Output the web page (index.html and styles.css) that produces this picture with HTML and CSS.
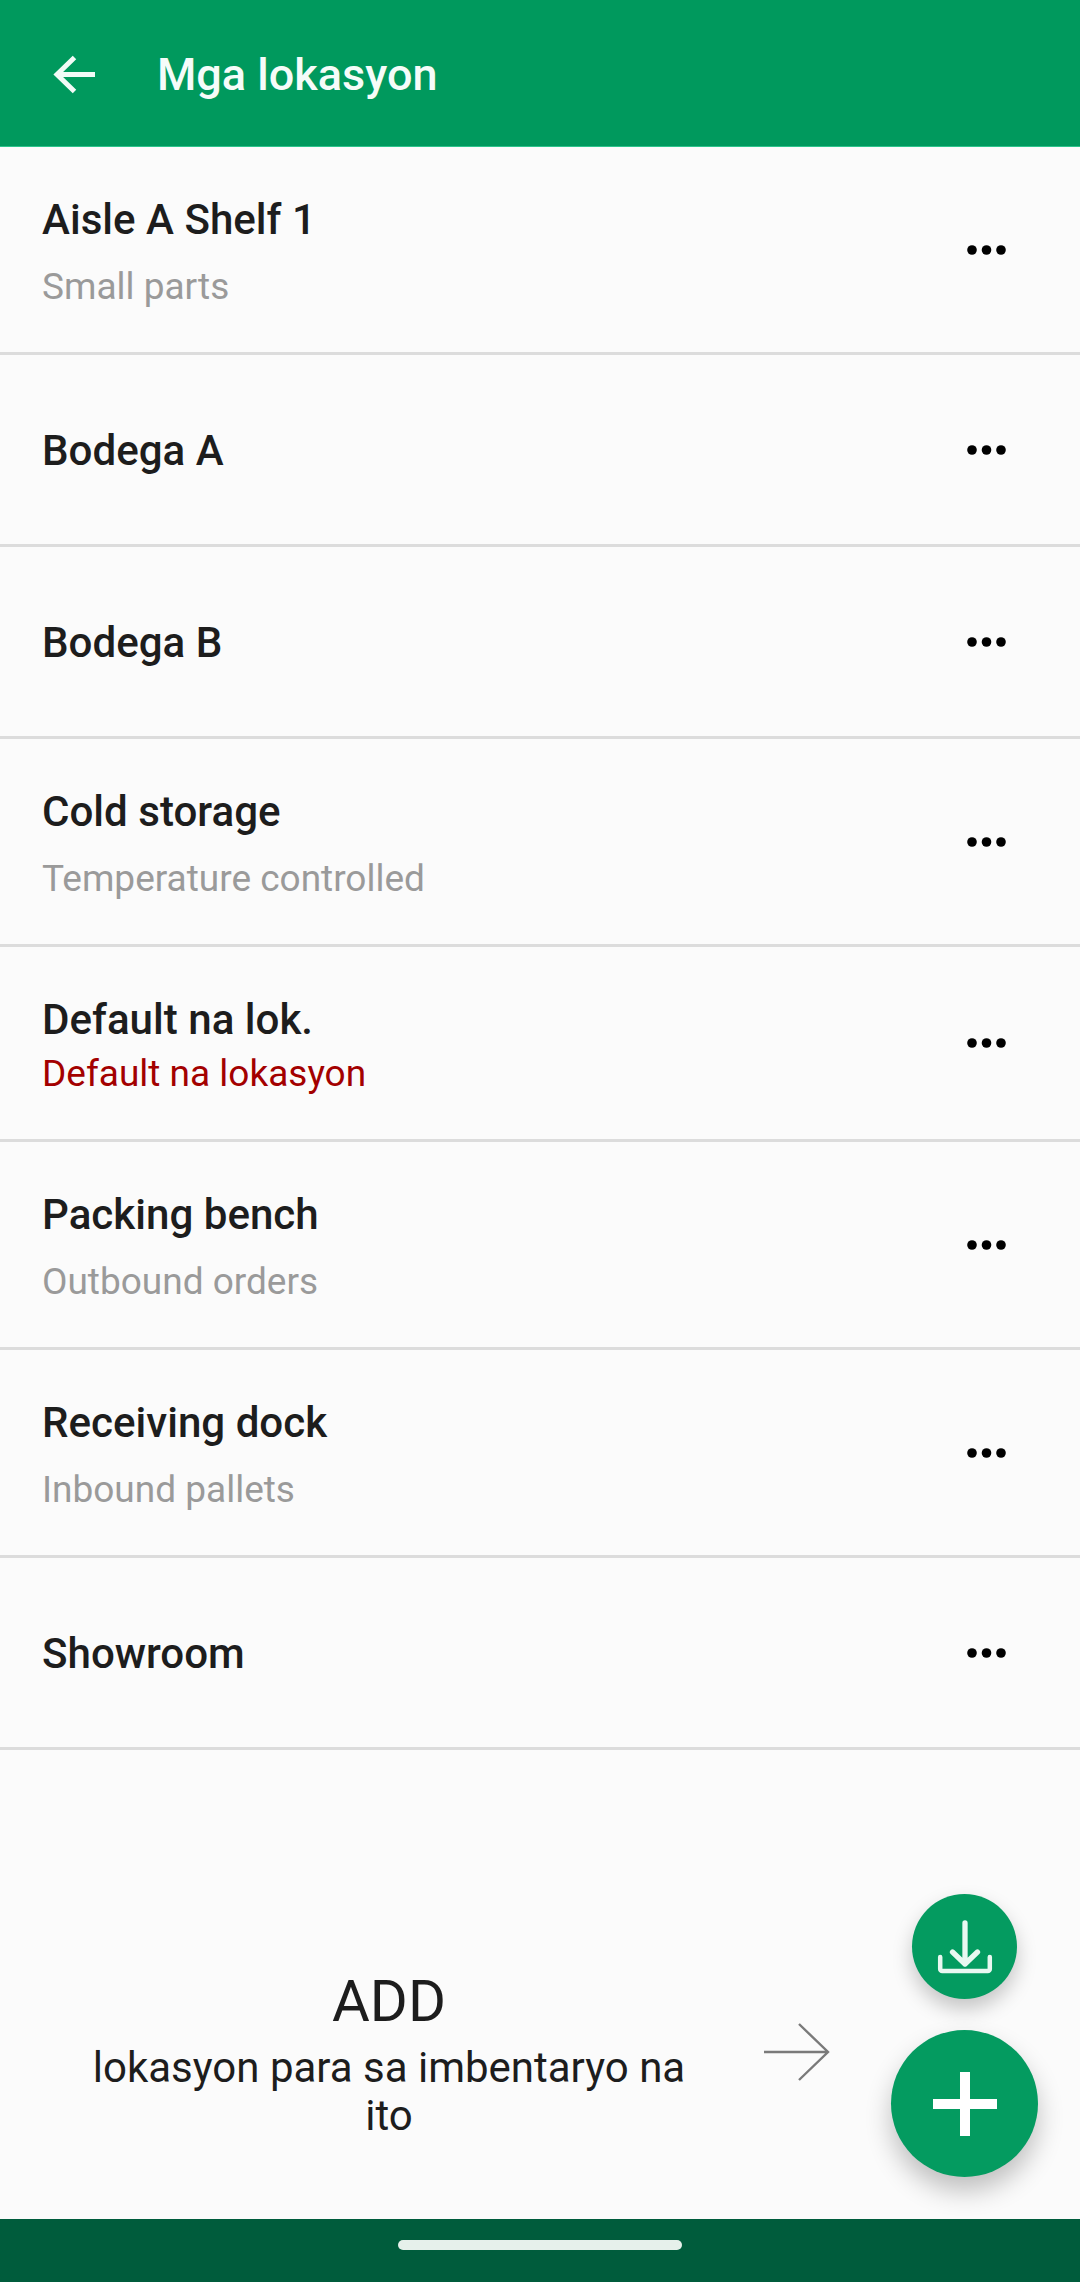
FILE: index.html
```html
<!DOCTYPE html>
<html lang="tl">
<head>
<meta charset="utf-8">
<title>Mga lokasyon</title>
<link rel="stylesheet" href="styles.css">
</head>
<body>
<div class="app">
  <header class="appbar">
    <svg class="back" viewBox="0 0 44 44" width="44" height="44"><path d="M43 21.500H4M22.500 4.500 5 21.500 22.500 38.500" fill="none" stroke="#f2fbf7" stroke-width="5"/></svg>
    <h1 class="appbar-title">Mga lokasyon</h1>
  </header>
  <ul class="list">
    <li class="row row-two"><div class="row-text"><div class="name">Aisle A Shelf 1</div><div class="sub">Small parts</div></div><svg class="more" viewBox="0 0 40 10" width="40" height="10"><circle cx="5" cy="5" r="4.800"/><circle cx="19.500" cy="5" r="4.800"/><circle cx="34" cy="5" r="4.800"/></svg></li>
    <li class="row row-one"><div class="row-text"><div class="name">Bodega A</div></div><svg class="more" viewBox="0 0 40 10" width="40" height="10"><circle cx="5" cy="5" r="4.800"/><circle cx="19.500" cy="5" r="4.800"/><circle cx="34" cy="5" r="4.800"/></svg></li>
    <li class="row row-one"><div class="row-text"><div class="name">Bodega B</div></div><svg class="more" viewBox="0 0 40 10" width="40" height="10"><circle cx="5" cy="5" r="4.800"/><circle cx="19.500" cy="5" r="4.800"/><circle cx="34" cy="5" r="4.800"/></svg></li>
    <li class="row row-two"><div class="row-text"><div class="name">Cold storage</div><div class="sub">Temperature controlled</div></div><svg class="more" viewBox="0 0 40 10" width="40" height="10"><circle cx="5" cy="5" r="4.800"/><circle cx="19.500" cy="5" r="4.800"/><circle cx="34" cy="5" r="4.800"/></svg></li>
    <li class="row row-default"><div class="row-text"><div class="name">Default na lok.</div><div class="sub sub-default">Default na lokasyon</div></div><svg class="more" viewBox="0 0 40 10" width="40" height="10"><circle cx="5" cy="5" r="4.800"/><circle cx="19.500" cy="5" r="4.800"/><circle cx="34" cy="5" r="4.800"/></svg></li>
    <li class="row row-two"><div class="row-text"><div class="name">Packing bench</div><div class="sub">Outbound orders</div></div><svg class="more" viewBox="0 0 40 10" width="40" height="10"><circle cx="5" cy="5" r="4.800"/><circle cx="19.500" cy="5" r="4.800"/><circle cx="34" cy="5" r="4.800"/></svg></li>
    <li class="row row-two"><div class="row-text"><div class="name">Receiving dock</div><div class="sub">Inbound pallets</div></div><svg class="more" viewBox="0 0 40 10" width="40" height="10"><circle cx="5" cy="5" r="4.800"/><circle cx="19.500" cy="5" r="4.800"/><circle cx="34" cy="5" r="4.800"/></svg></li>
    <li class="row row-one"><div class="row-text"><div class="name">Showroom</div></div><svg class="more" viewBox="0 0 40 10" width="40" height="10"><circle cx="5" cy="5" r="4.800"/><circle cx="19.500" cy="5" r="4.800"/><circle cx="34" cy="5" r="4.800"/></svg></li>
  </ul>
  <section class="hint">
    <div class="hint-text">
      <div class="hint-add">ADD</div>
      <div class="hint-desc">lokasyon para sa imbentaryo na ito</div>
    </div>
    <svg class="hint-arrow" viewBox="0 0 66 58" width="66" height="58"><path d="M0 29H64M35 1 64 29 35 57" fill="none" stroke="#7a7a7a" stroke-width="2.400"/></svg>
  </section>
  <button class="fab fab-small" aria-label="I-download">
    <svg viewBox="0 0 56 56" width="56" height="56"><path class="dl-arrow" d="M28 4V45M15.500 33 28 45 40.500 33"/><path class="dl-tray" d="M3.200 38V50a2 2 0 0 0 2 2H50.800a2 2 0 0 0 2-2V38"/></svg>
  </button>
  <button class="fab fab-large" aria-label="Add">
    <svg viewBox="0 0 64 64" width="64" height="64"><path d="M32 0V64M0 32H64" fill="none" stroke="#fff" stroke-width="10"/></svg>
  </button>
  <footer class="navbar"><span class="handle"></span></footer>
</div>
</body>
</html>
```
FILE: styles.css
```css
* { box-sizing: border-box; }
html, body { margin: 0; padding: 0; }
body { font-family: Roboto, "Noto Sans", sans-serif; background: #fbfbfb; }
.app { position: relative; width: 1080px; height: 2282px; display: flex; flex-direction: column; overflow: hidden; background: #fbfbfb; }
.appbar { height: 147px; flex: none; background: #00995d; display: flex; align-items: center; padding: 3px 0 0 52px; gap: 61px; border-bottom: 1px solid #2cc48c; }
.back { flex: none; }
.appbar-title { margin: 0; font-size: 45px; font-weight: 500; color: #f5fcf9; }
.list { list-style: none; margin: 0; padding: 0; flex: none; }
.row { display: flex; align-items: center; justify-content: space-between; padding: 0 73.500px 0 42px; border-bottom: 3px solid #dcdcdc; }
.row-two { height: 208px; }
.row-one { height: 192px; }
.row-default { height: 195px; }
.row-text { padding-top: 3px; }
.name { font-size: 42.100px; font-weight: 500; line-height: 50px; color: #1d1d1d; }
.sub { font-size: 37px; line-height: 42px; color: #9a9a9a; margin-top: 21px; }
.sub-default { color: #a30000; margin-top: 8px; }
.more { fill: #000; flex: none; }
.hint { flex: 1; display: flex; align-items: flex-start; padding: 219px 0 0 79px; }
.hint-text { width: 620px; text-align: center; color: #1d1d1d; }
.hint-add { font-size: 58px; line-height: 64px; }
.hint-desc { font-size: 42px; line-height: 48px; margin-top: 11px; }
.hint-arrow { flex: none; margin: 54px 0 0 65px; }
.fab { position: absolute; border: 0; padding: 0; border-radius: 50%; background: #049b60; display: flex; align-items: center; justify-content: center; }
.fab-small { left: 912px; top: 1894px; width: 105px; height: 105px; box-shadow: 0 10px 20px rgba(0,0,0,.22); }
.fab-large { left: 891px; top: 2030px; width: 147px; height: 147px; box-shadow: 0 14px 26px rgba(0,0,0,.24); }
.dl-arrow { fill: none; stroke: #e9f8f1; stroke-width: 5.300; stroke-linecap: round; stroke-linejoin: round; }
.dl-tray { fill: none; stroke: #e9f8f1; stroke-width: 4.500; stroke-linecap: round; stroke-linejoin: round; }
.navbar { height: 63px; flex: none; background: #005c3c; display: flex; justify-content: center; padding-top: 21px; }
.handle { width: 284px; height: 10px; border-radius: 5px; background: #e6f0eb; }
```
